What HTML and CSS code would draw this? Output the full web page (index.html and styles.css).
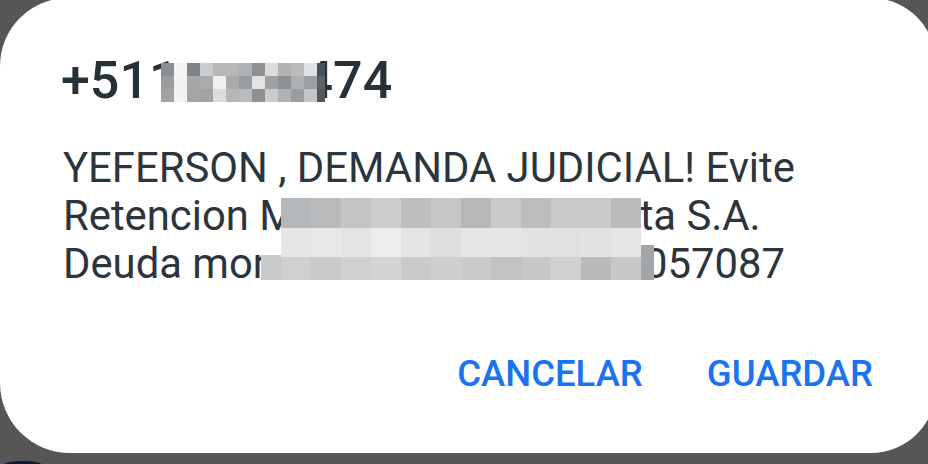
FILE: index.html
```html
<!DOCTYPE html>
<html lang="es">

<head>
    <meta charset="UTF-8">
    <meta name="viewport" content="width=device-width, initial-scale=1.0">
    <title>Guardar contacto</title>

    <link rel="stylesheet" href="styles.css">
</head>

<body>
    <div class="dialog">

        <div class="dialog__title">
            +511<span class="blank blank--title"></span>474
            <!-- numero pixelado -->
            <svg class="mosaic mosaic--title" width="164" height="39" viewBox="0 0 164 39">
                <rect x="0" y="0" width="13" height="13" fill="#8b8f92"/>
                <rect x="13" y="0" width="13" height="13" fill="#f4f4f4"/>
                <rect x="26" y="0" width="13" height="13" fill="#7f8386"/>
                <rect x="39" y="0" width="13" height="13" fill="#c9cbcd"/>
                <rect x="52" y="0" width="13" height="13" fill="#b5b7b9"/>
                <rect x="65" y="0" width="13" height="13" fill="#b5b7b9"/>
                <rect x="78" y="0" width="13" height="13" fill="#b0b2b4"/>
                <rect x="91" y="0" width="13" height="13" fill="#8f9295"/>
                <rect x="104" y="0" width="13" height="13" fill="#dcdcdc"/>
                <rect x="117" y="0" width="13" height="13" fill="#b0b2b4"/>
                <rect x="130" y="0" width="13" height="13" fill="#b9bbbd"/>
                <rect x="143" y="0" width="13" height="13" fill="#dfe1e2"/>

                <rect x="0" y="13" width="13" height="13" fill="#9a9d9f"/>
                <rect x="13" y="13" width="13" height="13" fill="#f2f2f2"/>
                <rect x="26" y="13" width="13" height="13" fill="#a5a7a9"/>
                <rect x="39" y="13" width="13" height="13" fill="#a8aaac"/>
                <rect x="52" y="13" width="13" height="13" fill="#f0f0f0"/>
                <rect x="65" y="13" width="13" height="13" fill="#a9abad"/>
                <rect x="78" y="13" width="13" height="13" fill="#9a9d9f"/>
                <rect x="91" y="13" width="13" height="13" fill="#e3e3e3"/>
                <rect x="104" y="13" width="13" height="13" fill="#9fa2a4"/>
                <rect x="117" y="13" width="13" height="13" fill="#8f9295"/>
                <rect x="130" y="13" width="13" height="13" fill="#aeb0b2"/>
                <rect x="143" y="13" width="13" height="13" fill="#9c9fa1"/>

                <rect x="0" y="26" width="13" height="13" fill="#a0a2a4"/>
                <rect x="13" y="26" width="13" height="13" fill="#f3f3f3"/>
                <rect x="26" y="26" width="13" height="13" fill="#a3a5a7"/>
                <rect x="39" y="26" width="13" height="13" fill="#a0a3a5"/>
                <rect x="52" y="26" width="13" height="13" fill="#dcdcdc"/>
                <rect x="65" y="26" width="13" height="13" fill="#b4b6b8"/>
                <rect x="78" y="26" width="13" height="13" fill="#b9bbbd"/>
                <rect x="91" y="26" width="13" height="13" fill="#8f9295"/>
                <rect x="104" y="26" width="13" height="13" fill="#c8cacc"/>
                <rect x="117" y="26" width="13" height="13" fill="#afb1b3"/>
                <rect x="130" y="26" width="13" height="13" fill="#9b9ea0"/>
                <rect x="143" y="26" width="13" height="13" fill="#c3c5c7"/>

                <rect x="156" y="0" width="8" height="13" fill="#4a5054"/>
                <rect x="156" y="13" width="8" height="13" fill="#5c6266"/>
                <rect x="156" y="26" width="8" height="13" fill="#52585c"/>
            </svg>
        </div>

        <div class="dialog__message">
            <div>YEFERSON , DEMANDA JUDICIAL! Evite</div>
            <div>Retencion M<span class="blank blank--line2"></span>ta S.A.</div>
            <div>Deuda mor<span class="blank blank--line3"></span>057087</div>

            <svg class="mosaic mosaic--message" width="394" height="82" viewBox="0 0 394 82">
                <rect x="0" y="57" width="20" height="25" fill="#c9cacb"/>
                <rect x="380" y="47" width="13" height="35" fill="#a3a6a8"/>

                <rect x="20" y="0" width="30" height="30" fill="#b4b7b9"/>
                <rect x="50" y="0" width="30" height="30" fill="#b9bbbd"/>
                <rect x="80" y="0" width="30" height="30" fill="#c3c5c6"/>
                <rect x="110" y="0" width="30" height="30" fill="#cbcdce"/>
                <rect x="140" y="0" width="30" height="30" fill="#bcbec0"/>
                <rect x="170" y="0" width="30" height="30" fill="#c4c6c7"/>
                <rect x="200" y="0" width="30" height="30" fill="#b6b8ba"/>
                <rect x="230" y="0" width="30" height="30" fill="#c8cacb"/>
                <rect x="260" y="0" width="30" height="30" fill="#bbbdbf"/>
                <rect x="290" y="0" width="30" height="30" fill="#c8cacb"/>
                <rect x="320" y="0" width="30" height="30" fill="#c8cacb"/>
                <rect x="350" y="0" width="30" height="30" fill="#b9bbbd"/>

                <rect x="20" y="30" width="30" height="29" fill="#e6e6e6"/>
                <rect x="50" y="30" width="30" height="29" fill="#e8e8e8"/>
                <rect x="80" y="30" width="30" height="29" fill="#e3e3e3"/>
                <rect x="110" y="30" width="30" height="29" fill="#ececec"/>
                <rect x="140" y="30" width="30" height="29" fill="#e4e4e4"/>
                <rect x="170" y="30" width="30" height="29" fill="#dedede"/>
                <rect x="200" y="30" width="30" height="29" fill="#e6e6e6"/>
                <rect x="230" y="30" width="30" height="29" fill="#e6e6e6"/>
                <rect x="260" y="30" width="30" height="29" fill="#e2e2e2"/>
                <rect x="290" y="30" width="30" height="29" fill="#e0e0e0"/>
                <rect x="320" y="30" width="30" height="29" fill="#e2e2e2"/>
                <rect x="350" y="30" width="30" height="29" fill="#e6e6e6"/>

                <rect x="20" y="59" width="30" height="23" fill="#cfd0d1"/>
                <rect x="50" y="59" width="30" height="23" fill="#c8cacb"/>
                <rect x="80" y="59" width="30" height="23" fill="#cfd0d1"/>
                <rect x="110" y="59" width="30" height="23" fill="#d3d4d5"/>
                <rect x="140" y="59" width="30" height="23" fill="#c8cacb"/>
                <rect x="170" y="59" width="30" height="23" fill="#cdcfd0"/>
                <rect x="200" y="59" width="30" height="23" fill="#c8cacb"/>
                <rect x="230" y="59" width="30" height="23" fill="#c0c2c3"/>
                <rect x="260" y="59" width="30" height="23" fill="#c6c8c9"/>
                <rect x="290" y="59" width="30" height="23" fill="#cfd0d1"/>
                <rect x="320" y="59" width="30" height="23" fill="#b8babb"/>
                <rect x="350" y="59" width="30" height="23" fill="#c6c8c9"/>
            </svg>
        </div>

        <div class="dialog__actions">
            <button class="dialog__button">CANCELAR</button>
            <button class="dialog__button">GUARDAR</button>
        </div>
    </div>

    <span class="dock-icon"></span>
</body>

</html>
```

FILE: styles.css
```css
body {
    margin: 0;
    height: 464px;
    overflow: hidden;
    background-color: #565656;
    font-family: Roboto, "Noto Sans", sans-serif;
}

.dialog {
    display: flex;
    flex-direction: column;
    box-sizing: border-box;
    width: 936px;
    height: 455px;
    margin-top: -2px;
    background-color: #fff;
    border-radius: 68px 65px 65px 70px;
}

.dialog__title {
    position: relative;
    margin-top: 53px;
    padding-left: 61px;
    font-size: 52px;
    font-weight: 500;
    line-height: 60px;
    color: #263238;
}

.dialog__message {
    position: relative;
    margin-top: 33px;
    padding-left: 63px;
    font-size: 41.8px;
    line-height: 48px;
    color: #2b353b;
}

.blank {
    display: inline-block;
}

.blank--title {
    width: 125px;
}

.blank--line2 {
    width: 344px;
}

.blank--line3 {
    width: 377px;
}

.mosaic {
    position: absolute;
    display: block;
}

.mosaic--title {
    left: 161px;
    top: 12px;
}

.mosaic--message {
    left: 261px;
    top: 54px;
}

.dialog__actions {
    display: flex;
    justify-content: flex-end;
    gap: 64px;
    margin-top: auto;
    margin-bottom: 59px;
    padding-right: 63px;
}

.dialog__button {
    padding: 0;
    border: none;
    background: none;
    font-family: inherit;
    font-size: 36.5px;
    font-weight: 500;
    line-height: 40px;
    color: #1a73f0;
}

.dock-icon {
    display: block;
    width: 36px;
    height: 3px;
    margin: 8px 0 0 5px;
    border-radius: 18px 18px 0 0 / 3px 3px 0 0;
    background-color: #0e1a3a;
}
```
